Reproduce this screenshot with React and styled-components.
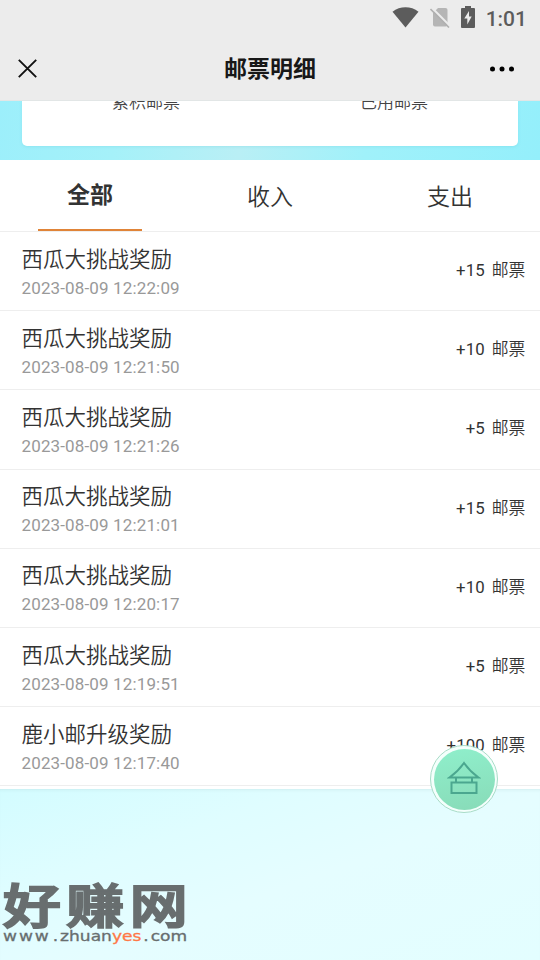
import React from "react";
import styled, { createGlobalStyle } from "styled-components";

const GlobalStyle = createGlobalStyle`
  * {
    box-sizing: border-box;
  }

  body {
    margin: 0;
    font-family: Roboto, "Noto Sans CJK SC", sans-serif;
    color: #333;
  }
`;

const Page = styled.div`
  position: relative;
  width: 540px;
  height: 960px;
  overflow: hidden;

  display: flex;
  flex-flow: column nowrap;
`;

const StatusBar = styled.div`
  flex: 0 0 36px;
  padding: 0 13px 2px 392px;
  background-color: #ececec;
  color: #5c5c5c;

  display: flex;
  align-items: center;
  justify-content: space-between;
`;

const Clock = styled.span`
  font-size: 21px;
  font-weight: 500;
  line-height: 30px;
  padding-top: 4px;
`;

const Header = styled.header`
  flex: 0 0 65px;
  padding: 1px 25px 0 18px;
  background-color: #ececec;
  border-bottom: 1px solid #e2e6e6;

  display: grid;
  grid-template-columns: 60px 1fr 53px;
  align-items: center;

  svg:last-child {
    justify-self: end;
  }
`;

const Title = styled.h1`
  margin: 0;
  padding-top: 3px;
  font-size: 23px;
  font-weight: 700;
  line-height: 60px;
  color: #181818;
  text-align: center;
`;

const Summary = styled.section`
  flex: 0 0 59px;
  padding: 0 22px;
  overflow: hidden;
  background: linear-gradient(100deg, #9ceffb 0%, #a5f1f9 22%, #b9eff5 45%, #a0f1fa 68%, #94effb 100%);
`;

const SummaryCard = styled.div`
  height: 45px;
  background-color: white;
  border-radius: 0 0 5px 5px;
  box-shadow: 0 1px 3px rgba(90, 200, 215, 0.25);

  display: flex;
`;

const SummaryLabel = styled.div`
  flex: 1 1 50%;
  margin-top: -12px;
  font-size: 17px;
  font-weight: 350;
  line-height: 26px;
  color: #444;
  text-align: center;
`;

const Panel = styled.main`
  flex: 0 0 629px;
  background-color: white;
`;

const Backdrop = styled.div`
  flex: 1 1 auto;
  background: linear-gradient(160deg, #d3fcff 0%, #dffdff 30%, #e5fdff 55%, #e3feff 100%);
  box-shadow: inset 0 3px 3px -2px rgba(160, 190, 190, 0.25);
`;

const Tabs = styled.nav`
  height: 72px;
  border-bottom: 1px solid #eee;

  display: flex;
`;

const Tab = styled.div`
  flex: 1 1 0;
  margin: 0 38px;
  height: 71px;
  font-size: 23px;
  font-weight: ${props => (props.$active ? 700 : 350)};
  line-height: ${props => (props.$active ? 71 : 75)}px;
  text-align: center;
  border-bottom: ${props => (props.$active ? "2px solid #e08438" : "none")};
`;

const List = styled.ul`
  margin: 0;
  padding: 0;
  list-style: none;
`;

const Row = styled.li`
  height: 79.2px;
  padding: 0 14.5px 0 21.5px;
  border-bottom: 1px solid #eee;

  display: flex;
  align-items: center;
  justify-content: space-between;
`;

const Name = styled.div`
  margin-top: 4px;
  font-size: 21.5px;
  font-weight: 350;
  line-height: 30px;
`;

const Time = styled.div`
  font-size: 17px;
  line-height: 27px;
  letter-spacing: 0.14px;
  color: #999;
`;

const Amount = styled.div`
  font-size: 16.8px;
  line-height: 24px;
  letter-spacing: 0.15px;
  word-spacing: 2.4px;
  margin-top: -2px;
`;

const Unit = styled.span`
  font-weight: 350;
`;

const FloatButton = styled.div`
  position: absolute;
  left: 430px;
  top: 745px;
  width: 68px;
  height: 68px;
  padding: 2.5px;
  border: 1px solid #a9dcc8;
  border-radius: 50%;
  background-color: #f4fffc;
`;

const FloatFace = styled.div`
  height: 100%;
  padding-bottom: 2px;
  border-radius: 50%;
  background: linear-gradient(170deg, #8fefcb, #88dbb8);

  display: flex;
  align-items: center;
  justify-content: center;
`;

const Watermark = styled.div`
  position: absolute;
  left: 3px;
  top: 878px;
  color: #686e6f;
`;

const Brand = styled.div`
  font-family: "Noto Sans CJK SC", sans-serif;
  font-size: 47px;
  font-weight: 500;
  line-height: 50px;
  letter-spacing: 4.5px;
  width: 154px;
  white-space: nowrap;
  transform: scaleX(1.23);
  transform-origin: left center;
  -webkit-text-stroke: 2.2px #686e6f;
  stroke-linejoin: round;
  text-shadow: 0 0 2px white;
`;

const Site = styled.div`
  font-family: "DejaVu Sans", sans-serif;
  font-size: 14px;
  line-height: 16px;
  width: 151px;
  white-space: nowrap;
  transform: scaleX(1.22);
  transform-origin: left center;
  -webkit-text-stroke: 0.3px;

  display: flex;
  justify-content: space-between;
`;

const SitePart = styled.span`
  letter-spacing: ${props => props.$gap || 0}px;
  color: ${props => (props.$accent ? "#ff7847" : "inherit")};
`;

const records = [
  { name: "西瓜大挑战奖励", time: "2023-08-09 12:22:09", amount: 15 },
  { name: "西瓜大挑战奖励", time: "2023-08-09 12:21:50", amount: 10 },
  { name: "西瓜大挑战奖励", time: "2023-08-09 12:21:26", amount: 5 },
  { name: "西瓜大挑战奖励", time: "2023-08-09 12:21:01", amount: 15 },
  { name: "西瓜大挑战奖励", time: "2023-08-09 12:20:17", amount: 10 },
  { name: "西瓜大挑战奖励", time: "2023-08-09 12:19:51", amount: 5 },
  { name: "鹿小邮升级奖励", time: "2023-08-09 12:17:40", amount: 100 },
];

function WifiIcon() {
  return (
    <svg width="27" height="22" viewBox="0 0 27 22">
      <path d="M.5 5.700C8 -.2 19 -.2 26.500 5.700L13.500 21.500Z" fill="#5c5c5c" />
    </svg>
  );
}

function NoSimIcon() {
  return (
    <svg width="21" height="22" viewBox="0 0 21 22">
      <path d="M3 7L8 2H15.500Q17.500 2 17.500 4V18.500Q17.500 20.500 15.500 20.500H5Q3 20.500 3 18.500Z" fill="#b5b5b5" />
      <path d="M1.800 1.800L20.300 20.300" stroke="#ececec" strokeWidth="2.200" />
      <path d="M.5 3L19 21.500" stroke="#b0b0b0" strokeWidth="1.600" />
    </svg>
  );
}

function BatteryIcon() {
  return (
    <svg width="14" height="22" viewBox="0 0 14 22">
      <path d="M4 0H10V2H13Q14 2 14 3V21Q14 22 13 22H1Q0 22 0 21V3Q0 2 1 2H4Z" fill="#5c5c5c" />
      <path d="M8 5L3.300 12.500H6.300V18.500L10.700 10.500H8Z" fill="#ececec" />
    </svg>
  );
}

function CloseIcon() {
  return (
    <svg width="19" height="19" viewBox="0 0 19 19">
      <path d="M.8 .8L18.200 18.200M18.200 .8L.8 18.200" stroke="#111" strokeWidth="1.900" />
    </svg>
  );
}

function MoreIcon() {
  return (
    <svg width="26" height="6" viewBox="0 0 26 6">
      <circle cx="3.500" cy="3" r="2.500" />
      <circle cx="13" cy="3" r="2.500" />
      <circle cx="22.500" cy="3" r="2.500" />
    </svg>
  );
}

function HouseIcon() {
  return (
    <svg width="34" height="34" viewBox="0 0 34 34" fill="none" stroke="#4ba78f" strokeWidth="2">
      <path d="M17 2Q11 10.500 2.500 16.500H31.500Q23 10.500 17 2Z" />
      <path d="M9 16.500V21.500M25 21.500V16.500" />
      <rect x="4.500" y="21.500" width="25" height="10.500" />
    </svg>
  );
}

function App() {
  return (
    <Page>
      <GlobalStyle />
      <StatusBar>
        <WifiIcon />
        <NoSimIcon />
        <BatteryIcon />
        <Clock>1:01</Clock>
      </StatusBar>
      <Header>
        <CloseIcon />
        <Title>邮票明细</Title>
        <MoreIcon />
      </Header>
      <Summary>
        <SummaryCard>
          <SummaryLabel>累积邮票</SummaryLabel>
          <SummaryLabel>已用邮票</SummaryLabel>
        </SummaryCard>
      </Summary>
      <Panel>
        <Tabs>
          <Tab $active>全部</Tab>
          <Tab>收入</Tab>
          <Tab>支出</Tab>
        </Tabs>
        <List>
          {records.map(record => (
            <Row key={record.time}>
              <div>
                <Name>{record.name}</Name>
                <Time>{record.time}</Time>
              </div>
              <Amount>
                +{record.amount} <Unit>邮票</Unit>
              </Amount>
            </Row>
          ))}
        </List>
      </Panel>
      <Backdrop />
      <FloatButton>
        <FloatFace>
          <HouseIcon />
        </FloatFace>
      </FloatButton>
      <Watermark>
        <Brand>好赚网</Brand>
        <Site>
          <SitePart $gap={1.6}>www</SitePart>
          <SitePart>.</SitePart>
          <SitePart>zhuan<SitePart $accent>yes</SitePart></SitePart>
          <SitePart>.</SitePart>
          <SitePart>com</SitePart>
        </Site>
      </Watermark>
    </Page>
  );
}

export default App;
